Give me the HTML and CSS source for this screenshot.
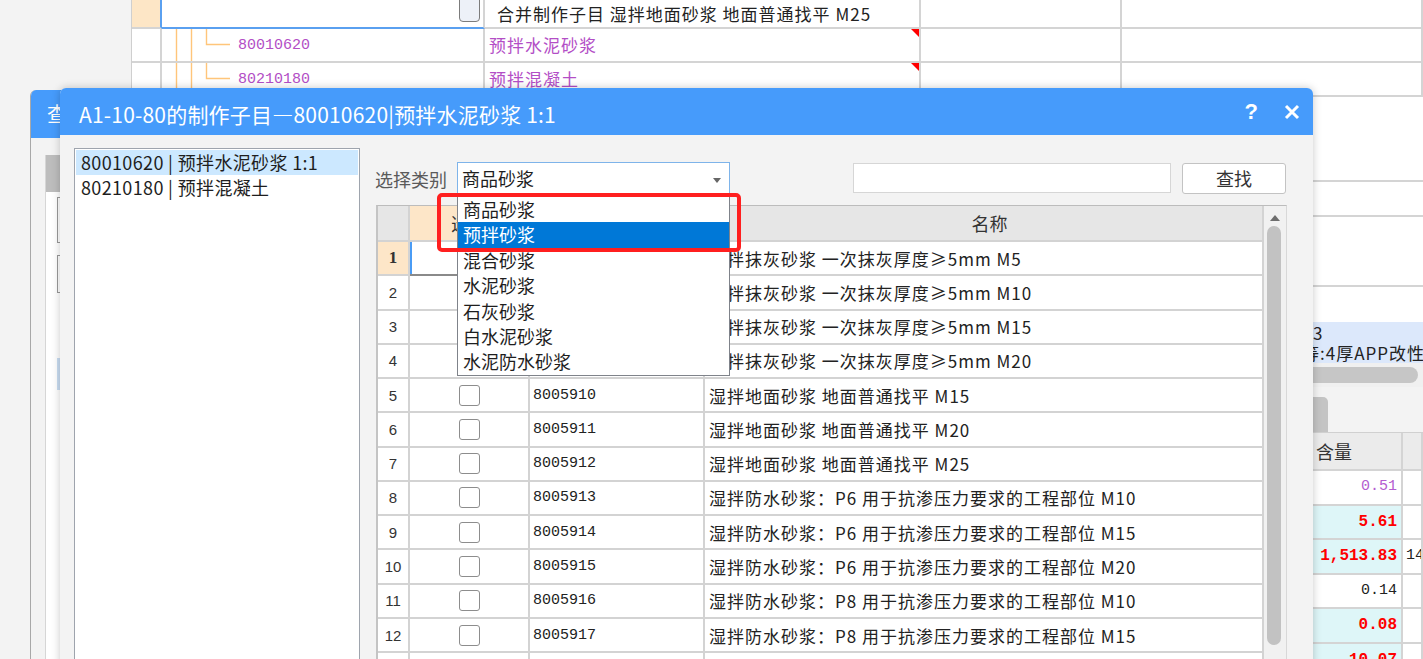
FILE: index.html
```html
<!DOCTYPE html>
<html lang="zh-CN">
<head>
<meta charset="utf-8">
<title>制作子目</title>
<link rel="stylesheet" href="styles.css">
</head>
<body>
<div class="app">
  <div class="side"></div>
  <div class="sheet">
    <div class="trow r1">
      <div class="c hsel"></div>
      <div class="c csel"><span class="editbtn"></span></div>
      <div class="c txt first">合并制作子目 湿拌地面砂浆 地面普通找平 M25</div>
      <div class="c"></div>
      <div class="c"></div>
    </div>
    <div class="trow">
      <div class="c"></div>
      <div class="c tree"><svg width="76" height="32" viewBox="0 0 76 32"><path d="M14.5 0V32M29.5 0V32M44.5 0V15.5H68" fill="none" stroke="#ffc57a" stroke-width="1.4"/></svg><span class="tcode">80010620</span></div>
      <div class="c txt purple flag">预拌水泥砂浆</div>
      <div class="c"></div>
      <div class="c"></div>
    </div>
    <div class="trow">
      <div class="c"></div>
      <div class="c tree"><svg width="76" height="32" viewBox="0 0 76 32"><path d="M14.5 0V32M29.5 0V32M44.5 0V15.5H68" fill="none" stroke="#ffc57a" stroke-width="1.4"/></svg><span class="tcode">80210180</span></div>
      <div class="c txt purple flag">预拌混凝土</div>
      <div class="c"></div>
      <div class="c"></div>
    </div>
    <div class="lower">
      <div class="rpanel">
        <div class="rp-a"></div>
        <div class="rp-b"></div>
        <div class="rp-c"></div>
        <div class="rp-d"></div>
        <div class="rp-e">
          <div class="l1">3</div>
          <div class="l2">等:4厚APP改性沥青</div>
        </div>
        <div class="rp-f"><span class="hthumb"></span></div>
        <div class="rp-g"></div>
        <div class="rp-h"><span class="tab"></span></div>
        <div class="rhead"><div class="hc1">含量</div><div></div></div>
        <div class="rrow"><div class="v purple2">0.51</div><div></div></div>
        <div class="rrow"><div class="v red cyan">5.61</div><div></div></div>
        <div class="rrow"><div class="v red cyan">1,513.83</div><div class="v2">14.5</div></div>
        <div class="rrow"><div class="v">0.14</div><div></div></div>
        <div class="rrow"><div class="v red cyan">0.08</div><div></div></div>
        <div class="rrow"><div class="v red cyan">10.07</div><div></div></div>
      </div>
    </div>
  </div>
</div>

<div class="dlg2">
  <div class="d2-title">查询</div>
  <div class="d2-panel">
    <div class="d2-bar"></div>
    <div class="d2-white">
      <div class="d2-f1"></div>
      <div class="d2-f2"></div>
      <div class="d2-sel"></div>
    </div>
  </div>
</div>

<div class="dlg">
  <div class="dlg-title">
    <span class="dlg-caption">A1-10-80的制作子目—80010620|预拌水泥砂浆 1:1</span>
    <span class="dlg-help">?</span>
    <svg class="dlg-close" width="16" height="16" viewBox="0 0 16 16"><path d="M2 2L14 14M14 2L2 14" stroke="#fff" stroke-width="3" fill="none"/></svg>
  </div>
  <div class="dlg-body">
    <div class="list">
      <div class="item sel">80010620 | 预拌水泥砂浆 1:1</div>
      <div class="item">80210180 | 预拌混凝土</div>
    </div>
    <div class="main">
      <div class="toolbar">
        <span class="lbl">选择类别</span>
        <div class="combo">商品砂浆<span class="arrow"></span>
          <ul class="dropdown">
            <li>商品砂浆</li>
            <li class="on">预拌砂浆</li>
            <li>混合砂浆</li>
            <li>水泥砂浆</li>
            <li>石灰砂浆</li>
            <li>白水泥砂浆</li>
            <li>水泥防水砂浆</li>
          </ul>
          <div class="mark"></div>
        </div>
        <div class="search"></div>
        <div class="btn">查找</div>
      </div>
      <div class="table">
        <div class="tmain">
          <div class="tr th"><div></div><div class="hsel">选择</div><div>编码</div><div class="hname">名称</div></div>
          <div class="tr"><div class="num cur">1</div><div class="chk cur"><span class="cb"></span></div><div class="code">8005906</div><div class="name">湿拌抹灰砂浆 一次抹灰厚度≥5mm M5</div></div>
          <div class="tr"><div class="num">2</div><div class="chk"><span class="cb"></span></div><div class="code">8005907</div><div class="name">湿拌抹灰砂浆 一次抹灰厚度≥5mm M10</div></div>
          <div class="tr"><div class="num">3</div><div class="chk"><span class="cb"></span></div><div class="code">8005908</div><div class="name">湿拌抹灰砂浆 一次抹灰厚度≥5mm M15</div></div>
          <div class="tr"><div class="num">4</div><div class="chk"><span class="cb"></span></div><div class="code">8005909</div><div class="name">湿拌抹灰砂浆 一次抹灰厚度≥5mm M20</div></div>
          <div class="tr"><div class="num">5</div><div class="chk"><span class="cb"></span></div><div class="code">8005910</div><div class="name">湿拌地面砂浆 地面普通找平 M15</div></div>
          <div class="tr"><div class="num">6</div><div class="chk"><span class="cb"></span></div><div class="code">8005911</div><div class="name">湿拌地面砂浆 地面普通找平 M20</div></div>
          <div class="tr"><div class="num">7</div><div class="chk"><span class="cb"></span></div><div class="code">8005912</div><div class="name">湿拌地面砂浆 地面普通找平 M25</div></div>
          <div class="tr"><div class="num">8</div><div class="chk"><span class="cb"></span></div><div class="code">8005913</div><div class="name">湿拌防水砂浆：P6 用于抗渗压力要求的工程部位 M10</div></div>
          <div class="tr"><div class="num">9</div><div class="chk"><span class="cb"></span></div><div class="code">8005914</div><div class="name">湿拌防水砂浆：P6 用于抗渗压力要求的工程部位 M15</div></div>
          <div class="tr"><div class="num">10</div><div class="chk"><span class="cb"></span></div><div class="code">8005915</div><div class="name">湿拌防水砂浆：P6 用于抗渗压力要求的工程部位 M20</div></div>
          <div class="tr"><div class="num">11</div><div class="chk"><span class="cb"></span></div><div class="code">8005916</div><div class="name">湿拌防水砂浆：P8 用于抗渗压力要求的工程部位 M10</div></div>
          <div class="tr"><div class="num">12</div><div class="chk"><span class="cb"></span></div><div class="code">8005917</div><div class="name">湿拌防水砂浆：P8 用于抗渗压力要求的工程部位 M15</div></div>
          <div class="tr"><div class="num">13</div><div class="chk"><span class="cb"></span></div><div class="code">8005918</div><div class="name">湿拌防水砂浆：P8 用于抗渗压力要求的工程部位 M20</div></div>
        </div>
        <div class="vscroll"><span class="up"></span><span class="thumb"></span></div>
      </div>
    </div>
  </div>
</div>
</body>
</html>
```

FILE: styles.css
```css
* { box-sizing: border-box; }
html, body { margin: 0; padding: 0; }
body {
  width: 1423px; height: 659px; overflow: hidden; position: relative;
  background: #f3f3f3; color: #222;
  font-family: "Noto Sans CJK SC", "Liberation Sans", sans-serif;
}

/* background application */
.app { display: flex; height: 659px; }
.side { width: 131px; flex: none; background: #f3f3f3; }
.sheet { flex: 1; min-width: 0; display: flex; flex-direction: column; background: #fff; border-left: 1px solid #cfcfcf; }
.trow { display: grid; grid-template-columns: 30px 323px 436px 201px 1fr; height: 34px; flex: none; }
.trow.r1 { height: 29px; }
.c { position: relative; overflow: hidden; white-space: nowrap; border-right: 2px solid #d4d4d4; border-bottom: 2px solid #d4d4d4; }
.c.hsel { background: #fde6c6; border-right-color: #5aa0f0; }
.c.csel { border-bottom-color: #5aa0f0; }
.editbtn { position: absolute; right: 3px; top: -4px; width: 21px; height: 26px; border: 1px solid #7c7c7c; border-radius: 4px; background: #edf1f8; }
.txt { font-size: 17px; letter-spacing: 1px; line-height: 32px; padding-left: 4px; }
.txt.first { padding-left: 12px; line-height: 27px; color: #222; }
.purple { color: #b34ec6; }
.flag::after { content: ""; position: absolute; right: 0; top: 0; border-top: 8px solid #f00; border-left: 8px solid transparent; }
.tree { display: flex; align-items: center; }
.tree svg { flex: none; display: block; }
.tcode { font-family: "Liberation Mono", monospace; font-size: 15px; color: #b34ec6; }

.lower { flex: 1; display: flex; justify-content: flex-end; min-height: 0; }
.rpanel { width: 301px; border-left: 2px solid #d4d4d4; display: flex; flex-direction: column; }
.rp-a { height: 85px; flex: none; border-bottom: 2px solid #d4d4d4; }
.rp-b { height: 35px; flex: none; border-bottom: 2px solid #d4d4d4; }
.rp-c { height: 70px; flex: none; border-bottom: 2px solid #d4d4d4; }
.rp-d { height: 35px; flex: none; }
.rp-e { height: 41px; flex: none; background: #dce8fb; font-size: 17px; letter-spacing: 1px; line-height: 20px; padding-top: 1px; white-space: nowrap; overflow: hidden; }
.rp-e .l1 { padding-left: 189px; }
.rp-e .l2 { padding-left: 178px; }
.rp-f { height: 24px; flex: none; background: #f0f0f0; padding: 4px 5px 4px 0; display: flex; }
.hthumb { flex: 1; background: #c6c6c6; border-radius: 8px; }
.rp-g { height: 10px; flex: none; background: #f3f3f3; }
.rp-h { height: 36px; flex: none; background: #f3f3f3; border-bottom: 1px solid #d0d0d0; display: flex; }
.tab { width: 204px; background: #c4c4c4; border-radius: 0 5px 0 0; }
.rhead { height: 38px; flex: none; display: grid; grid-template-columns: 279px 1fr; background: #ebebeb; border-bottom: 2px solid #d4d4d4; }
.rhead > div { border-right: 2px solid #d4d4d4; }
.hc1 { font-size: 18px; color: #333; line-height: 36px; padding-left: 192px; white-space: nowrap; }
.rrow { height: 34.5px; flex: none; display: grid; grid-template-columns: 279px 1fr; }
.rrow > div { border-right: 2px solid #d4d4d4; border-bottom: 2px solid #d4d4d4; white-space: nowrap; overflow: hidden; }
.v { font-family: "Liberation Mono", monospace; font-size: 15px; text-align: right; padding-right: 4px; line-height: 32px; color: #222; }
.v.purple2 { color: #b45cd0; }
.v.red { color: #f00; font-weight: bold; font-size: 16px; }
.v.cyan { background: #def6f8; }
.v2 { font-family: "Liberation Mono", monospace; font-size: 15px; padding-left: 3px; line-height: 32px; }

/* second dialog behind */
.dlg2 { position: absolute; left: 30px; top: 90px; width: 1100px; height: 600px; background: #f3f3f3; border-left: 1px solid #a8a8a8; border-radius: 6px 6px 0 0; overflow: hidden; }
.d2-title { height: 48px; background: #469bfb; color: #fff; font-size: 20px; line-height: 48px; padding-left: 16px; }
.d2-panel { margin: 17px 0 0 14px; border-left: 1px solid #d6d6d6; }
.d2-bar { height: 37px; background: #bdbdbd; }
.d2-white { height: 500px; background: #fff; padding: 5px 0 0 11px; }
.d2-f1 { width: 200px; height: 46px; border: 1px solid #9a9a9a; }
.d2-f2 { width: 200px; height: 38px; margin-top: 12px; border: 1px solid #9a9a9a; }
.d2-sel { width: 200px; height: 32px; margin-top: 65px; background: #c9ddf2; }

/* main dialog */
.dlg { position: absolute; left: 60px; top: 88px; width: 1253px; height: 640px; background: #f3f3f3; border-radius: 6px 6px 0 0; box-shadow: 0 0 9px rgba(0,0,0,0.22); display: flex; flex-direction: column; }
.dlg-title { height: 47px; flex: none; background: #469bfb; border-radius: 6px 6px 0 0; display: flex; align-items: center; color: #fff; }
.dlg-caption { flex: 1; font-size: 21px; letter-spacing: 0.2px; padding-left: 19px; padding-top: 4px; white-space: nowrap; }
.dlg-help { font-family: "Liberation Sans", sans-serif; font-size: 22px; font-weight: bold; margin-right: 26px; }
.dlg-close { display: block; margin-right: 13px; }
.dlg-body { flex: 1; min-height: 0; display: flex; padding: 13px 26px 0 14px; }
.list { width: 286px; flex: none; background: #fff; border: 1px solid #9ea4ad; padding: 1px; }
.item { height: 25px; line-height: 25px; padding-left: 5px; font-size: 18px; letter-spacing: 0.35px; white-space: nowrap; color: #1e1e1e; }
.item.sel { background: #cce8ff; }
.main { flex: 1; min-width: 0; margin-left: 15px; padding-top: 14px; display: flex; flex-direction: column; }
.toolbar { display: flex; align-items: flex-start; height: 34px; flex: none; }
.lbl { width: 72px; font-size: 18px; line-height: 34px; color: #5a5a5a; white-space: nowrap; }
.combo { position: relative; margin-left: 10px; width: 273px; height: 34px; border: 1px solid #7eb4ea; background: #fff; font-size: 18px; line-height: 31px; padding-left: 4px; color: #1e1e1e; }
.arrow { position: absolute; right: 8px; top: 15px; border-top: 5px solid #666; border-left: 4px solid transparent; border-right: 4px solid transparent; }
.dropdown { position: absolute; left: -1px; top: 33px; width: 273px; margin: 0; padding: 0; list-style: none; border: 1px solid #7f838a; background: #fff; z-index: 2; }
.dropdown li { height: 25.4px; line-height: 24px; padding-left: 5px; font-size: 18px; color: #1e1e1e; white-space: nowrap; }
.dropdown li.on { background: #0078d7; color: #fff; }
.mark { position: absolute; left: -21px; top: 30px; width: 304px; height: 59px; border: 4px solid #ff1f1f; border-radius: 5px; z-index: 3; }
.search { margin-left: auto; margin-top: 1px; width: 318px; height: 30px; border: 1px solid #d6d6d6; background: #fff; }
.btn { margin-left: 11px; margin-right: 1px; margin-top: 1px; width: 104px; height: 31px; border: 1px solid #c3c3c3; border-radius: 3px; background: #fff; font-size: 18px; line-height: 29px; text-align: center; color: #333; }

.table { flex: 1; min-height: 0; margin-top: 9px; margin-left: 1px; display: flex; background: #fff; border-top: 1px solid #bcbcbc; border-left: 2px solid #c4c4c4; border-right: 1px solid #d8d8d8; overflow: hidden; }
.tmain { flex: 1; min-width: 0; }
.tr { display: grid; grid-template-columns: 32px 120px 175px 559px; height: 34.27px; }
.tr > div { display: flex; align-items: center; overflow: hidden; white-space: nowrap; border-right: 2px solid #d3d3d3; border-bottom: 2px solid #d3d3d3; }
.tr.th { height: 36px; }
.th > div { justify-content: center; background: #e6e6e6; font-size: 18px; color: #333; }
.th > div.hsel { background: #fde6c8; }
.th > div.hname { padding-left: 12px; }
.num { justify-content: center; font-family: "Liberation Sans", sans-serif; font-size: 15px; color: #333; }
.num.cur { background: #fde6c8; font-family: "Liberation Serif", serif; font-weight: bold; font-size: 17px; }
.chk { justify-content: center; }
.chk.cur { box-shadow: inset 2px 0 0 #4a9cf5; border-bottom-color: #8a8a8a !important; }
.cb { width: 21px; height: 21px; border: 1px solid #8d8d8d; border-radius: 3px; background: #fff; }
.code { padding-left: 3px; font-family: "Liberation Mono", monospace; font-size: 15px; color: #222; }
.name { padding-left: 4px; font-size: 17px; letter-spacing: 1px; color: #222; }
.vscroll { width: 22px; flex: none; position: relative; background: #f1f1f1; }
.up { position: absolute; left: 6px; top: 9px; border-bottom: 6px solid #6d6d6d; border-left: 5px solid transparent; border-right: 5px solid transparent; }
.thumb { position: absolute; left: 3px; top: 20px; width: 14px; height: 419px; border-radius: 7px; background: #c2c2c2; }
```
